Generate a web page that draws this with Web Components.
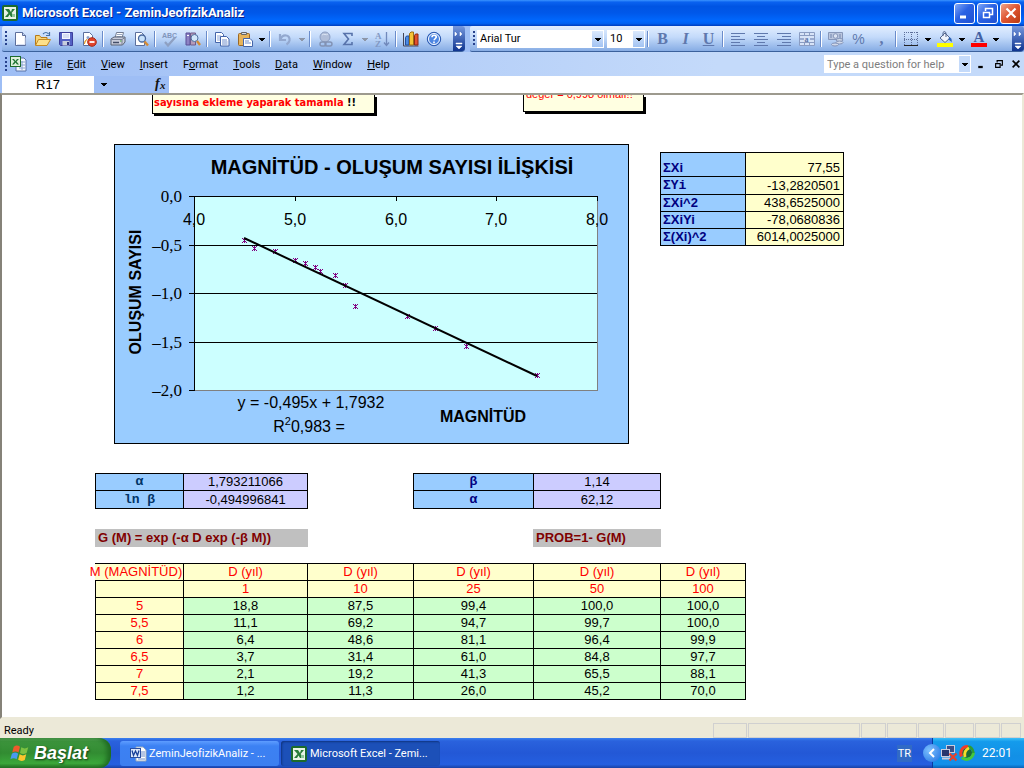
<!DOCTYPE html>
<html lang="tr">
<head>
<meta charset="utf-8">
<title>Microsoft Excel - ZeminJeofizikAnaliz</title>
<style>
html,body{margin:0;height:100%}
body{font-family:Roboto,"Noto Sans",sans-serif;font-size:11px;color:#000;background:#9ebef5}
</style>
</head>
<body>
<excel-desktop></excel-desktop>
<script>
const ICONS = {
excel:'<rect x="1" y="1" width="14" height="14" rx="1" fill="#e9f3e6" stroke="#1d6b2b" stroke-width="2"/><path d="M3 4h4l2 3 1-3h3L9.600 8l3.400 4H9L7.500 9.500 6 12H3l3.500-4z" fill="#2a7d3a"/><path d="M10 9h3v3h-3z" fill="#8fc79a"/>',
book:'<path d="M6 2h8l2 2v11H6z" fill="#f4f8ff" stroke="#5872a8"/><path d="M9 6h6M9 9h6M9 12h6M12 5v9" stroke="#8aa3d0"/><rect x=".5" y=".5" width="10" height="10" fill="#dff0dc" stroke="#1d6b2b"/><path d="M2 3h2l1.500 2L7 3h2L6.500 5.500 9 8.500H7L5.500 6.500 4 8.500H2l2.500-3z" fill="#217534"/>',
word:'<path d="M6 1h7l3 3v11H6z" fill="#fff" stroke="#9ab"/><path d="M11 6h4M11 8h4M11 10h4M8 13h7" stroke="#6d8cc8"/><rect x=".5" y="2.500" width="10" height="9" fill="#dce8fb" stroke="#2a4fa0"/><path d="M2 4.500l1.500 5 2-4.500 2 4.500 1.500-5" fill="none" stroke="#173f98" stroke-width="1.300"/>',
new:'<path d="M3.500 1.500h7l3 3v10h-10z" fill="#fff" stroke="#5c6f9c"/><path d="M10.500 1.500v3h3" fill="#c9d7f0" stroke="#5c6f9c"/><path d="M5 13.500h8v-7" stroke="#d7e0f2" fill="none"/>',
open:'<path d="M.5 14V4.500h4l1.500 2h6V9" fill="#f7d475" stroke="#b67a18"/><path d="M.5 14.500l3-6h12l-3.500 6z" fill="#fde08a" stroke="#c58a22"/><path d="M8 3c2-2 4-2 5.500 0M14.500 1v3.500H11" fill="none" stroke="#4470a8" stroke-width="1.200"/>',
save:'<path d="M1.500 1.500h13v13h-12l-1-1z" fill="#5461c4" stroke="#3d3f9c"/><path d="M4 2h8v6H4z" fill="#f3f6ff"/><path d="M5 4h6M5 6h6" stroke="#b9c5e8"/><path d="M4.500 10h7v4.500h-7z" fill="#c8cede"/><path d="M9 11h2v3H9z" fill="#343a83"/>',
perm:'<path d="M2.500 1.500h6l3 3v10h-9z" fill="#fff" stroke="#5c6f9c"/><path d="M3.500 13c0-3 1-4 3-5" fill="#f0b040" stroke="#dd9930"/><circle cx="7" cy="6.500" r="1.500" fill="#8a9fc8"/><circle cx="11" cy="11" r="4.300" fill="#e2432b" stroke="#a82a18"/><path d="M8.500 11h5" stroke="#fff" stroke-width="1.800"/>',
print:'<path d="M5 7l1.500-5.500h7L12 7" fill="#fff" stroke="#707a90"/><path d="M7 3.500h5M6.500 5.500h5" stroke="#98a6c0"/><path d="M1 8l3-2h11v5l-2.500 3H1z" fill="#c9cddb" stroke="#5b6274"/><path d="M1.500 8.500H12L15 6.500M12 9v5" stroke="#777f92" fill="none"/><path d="M3 11.500h6" stroke="#444e68" stroke-width="1.500"/><path d="M10 9.500h1.500v1H10z" fill="#4aab38"/>',
preview:'<path d="M2.500 1.500h6l3 3v10h-9z" fill="#fff" stroke="#5c6f9c"/><circle cx="9" cy="7.500" r="3.500" fill="#c8e2fb" stroke="#48679e" stroke-width="1.300"/><path d="M11.500 10.500l3.500 4" stroke="#d58a32" stroke-width="2.400"/>',
spell:'<text x="0" y="7" font-size="7" font-weight="bold" font-family="Liberation Sans" fill="#8195bb">ABC</text><path d="M3 11l3 3.500 7-8" stroke="#8ea0c2" stroke-width="2.200" fill="none"/>',
research:'<path d="M1 2h4v12H1z" fill="#8d82c4" stroke="#594f95"/><path d="M5.500 2h5v12h-5z" fill="#b59bb8" stroke="#6d5a8c"/><path d="M2 4.500h2M7 4.500h2" stroke="#fff"/><circle cx="9.500" cy="7" r="3.500" fill="#d1e6fa" stroke="#50709f"/><path d="M12 10l3 4" stroke="#d58a32" stroke-width="2.400"/>',
copy:'<path d="M1.500 1.500h6l2 2v8h-8z" fill="#fff" stroke="#4465aa"/><path d="M3 5h4M3 7h4M3 9h4" stroke="#8fa8da"/><path d="M6.500 5.500h6l2.500 2.500v7H6.500z" fill="#fff" stroke="#4465aa"/><path d="M8 9h5M8 11h5.500M8 13h5.500" stroke="#6e8dcb"/>',
paste:'<rect x="1.500" y="2.500" width="11" height="12" rx="1" fill="#e8b45a" stroke="#9c6824"/><path d="M4.500 3.500v-2h5v2z" fill="#d9dde8" stroke="#666"/><path d="M6.500 7.500H13l2.500 2.500v5.500h-9z" fill="#fff" stroke="#4465aa"/><path d="M8 10h4M8 12h6" stroke="#6e8dcb"/>',
undo:'<path d="M3 3v6h6M3.500 8.500c2-6 10-5 9 1-.4 2-1.500 3-3 4" stroke="#93a8cf" stroke-width="2.200" fill="none"/>',
link:'<circle cx="8" cy="6" r="5" fill="#b1bed8" stroke="#8c9ec2"/><path d="M5 4c2-2 4 1 6-1" stroke="#dce5f4" fill="none"/><rect x="3" y="11" width="6" height="4" rx="2" fill="none" stroke="#8292b3" stroke-width="1.400"/><rect x="8" y="11" width="7" height="4" rx="2" fill="none" stroke="#8292b3" stroke-width="1.400"/>',
sum:'<path d="M12 5V2.500H4L8.500 8 4 13.500h8V11" fill="none" stroke="#5873ab" stroke-width="1.600"/>',
sort:'<text x="1" y="7.500" font-size="9" font-weight="bold" font-family="Liberation Serif" fill="#8299c4">A</text><text x="1" y="16" font-size="9" font-weight="bold" font-family="Liberation Serif" fill="#8299c4">Z</text><path d="M12.500 1v13M10 11.500l2.500 3 2.500-3" fill="none" stroke="#7189bb" stroke-width="1.300"/>',
chart:'<path d="M.5 2v13h15" stroke="#445" fill="none"/><path d="M2.500 6.500l1-1.500h2.500v9H2.500z" fill="#4c8ae3" stroke="#22509c"/><path d="M6.500 2.500L8 1h2.500v13h-4z" fill="#f5c337" stroke="#9d6e12"/><path d="M11.500 4.500l1-1.500H15v11h-3.500z" fill="#e2502e" stroke="#8c2812"/>',
help:'<circle cx="8" cy="8" r="6.700" fill="#4d86e2" stroke="#2a57ae"/><circle cx="8" cy="8" r="5.500" fill="none" stroke="#fff"/><path d="M6 6.300c0-2.600 4.300-2.600 4.300-.2 0 1.500-2.200 1.500-2.200 3.200M8 10.500v1.700" fill="none" stroke="#fff" stroke-width="1.600"/>',
left:'<path d="M1 2.500h14M1 5.500h9M1 8.500h14M1 11.500h9M1 14.500h14" stroke="#6079ad"/>',
center:'<path d="M1 2.500h14M4 5.500h8M1 8.500h14M4 11.500h8M1 14.500h14" stroke="#6079ad"/>',
right:'<path d="M1 2.500h14M6 5.500h9M1 8.500h14M6 11.500h9M1 14.500h14" stroke="#6079ad"/>',
merge:'<path d="M.5 1.500h15v13H.500zM.5 4.500h15M.5 11.500h15M5.500 1.500v3M10.500 1.500v3M5.500 11.500v3M10.500 11.500v3" fill="#d7e3f7" stroke="#8a9cc2"/><text x="5.500" y="10.500" font-size="8" font-weight="bold" font-family="Liberation Serif" fill="#5c75aa">a</text><path d="M1 8h4M11 8h4" stroke="#5c75aa"/>',
money:'<path d="M.5 1.500h14v7H.500z" fill="#bbc6de" stroke="#8696b9"/><circle cx="7.500" cy="5" r="2.300" fill="#dbe3f2" stroke="#8696b9"/><path d="M3 3v4M12 3v4" stroke="#7084ad"/><ellipse cx="11.500" cy="9" rx="3.500" ry="1.500" fill="#d0d9ea" stroke="#8293b8"/><ellipse cx="11.500" cy="11.500" rx="3.500" ry="1.500" fill="#d0d9ea" stroke="#8293b8"/><ellipse cx="7" cy="13.500" rx="3.500" ry="1.500" fill="#d0d9ea" stroke="#8293b8"/>',
borders:'<path d="M1.500 1v14M8.500 1v14M14.500 1v14M1 1.500h14M1 8.500h14" stroke="#5d6f9a" stroke-dasharray="1 1"/><path d="M1 14.500h14" stroke="#222"/>',
fill:'<path d="M3 7l5-5 5 5-5 4.500z" fill="#eef3fb" stroke="#53658c"/><path d="M6 5V1.500c1-1.500 3-1 3 1V6" fill="none" stroke="#53658c"/><path d="M12 6c3 1 3 3 2.500 5.500-1-2-2-2-3-3z" fill="#2f65b6"/><path d="M0 12h16v4H0z" fill="#ff0"/>',
fontc:'<text x="2.500" y="11" font-size="15" font-weight="bold" font-family="Liberation Serif" fill="#4361a3">A</text><path d="M0 12h16v4H0z" fill="#f00"/>',
flag:'<path d="M3 3c2-1.600 3.600-1.300 5 0L6.800 7.500c-1.600-1-3.200-1-5 0z" fill="#ef5a2c"/><path d="M9 3.400c2 1.200 3.600 1.200 5.600 0L13.300 8c-2 1.200-3.700 1-5.300-.1z" fill="#7cc142"/><path d="M1.500 8.600c2-1.300 3.600-1.100 5 0L5.300 13c-1.600-1-3.200-1-5 0z" fill="#4a9af0"/><path d="M7.700 9c2 1.200 3.300 1.200 5.300 0l-1.200 4.500c-2 1.200-3.500 1-5.300-.1z" fill="#fcc52d"/>',
net:'<rect x="5.500" y=".5" width="8" height="7" fill="#3a4e86" stroke="#c8cfdf"/><rect x=".5" y="4.500" width="8" height="7" fill="#26376e" stroke="#c8cfdf"/><path d="M1 13.500h8" stroke="#c8cfdf" stroke-width="2"/><path d="M8.500 8.500l7 7M15.500 8.500l-7 7" stroke="#e8412a" stroke-width="2.200"/>',
orb:'<circle cx="8" cy="8" r="5" fill="#1c6b35"/><path d="M9 1.500C3 1 .5 7 2.500 11.500" fill="none" stroke="#f03a28" stroke-width="3"/><path d="M3 12.500c4 4 11 1 11.500-5" fill="none" stroke="#46c93c" stroke-width="3"/><path d="M14.500 8C14 3 11 1.500 9 2" fill="none" stroke="#2d9c34" stroke-width="2.600"/><path d="M10 3C6 5 5 8 6 12" fill="none" stroke="#f6dc2a" stroke-width="2.800"/>',
down:'<path d="M5 7h6v1h-1v1H9v1H7V9H6V8H5z" fill="currentColor"/>',
fx:'<text x="2" y="12" font-size="14" font-style="italic" font-weight="bold" font-family="Liberation Serif" fill="#111">f</text><text x="7" y="13" font-size="11" font-style="italic" font-weight="bold" font-family="Liberation Serif" fill="#111">x</text>',
min:'<path d="M3 12h6" stroke="currentColor" stroke-width="3"/>',
restore:'<path d="M5.500 6V3.500h7v6H10M5 3.500h8" fill="none" stroke="currentColor" stroke-width="1.500"/><path d="M3.500 7.500h6v5h-6zM3 7.500h7" fill="none" stroke="currentColor" stroke-width="1.500"/>',
close:'<path d="M3.500 3.500l9 9M12.500 3.500l-9 9" stroke="currentColor" stroke-width="2.200"/>'
};
class Base extends HTMLElement{
  constructor(){super();this.attachShadow({mode:'open'});}
  connectedCallback(){this.shadowRoot.innerHTML='<style>'+this.css()+'</style>'+this.html();}
  css(){return ':host{display:block}';}
  html(){return '<slot></slot>';}
}
const def=(n,css,html)=>customElements.define(n,class extends Base{css(){return css;}html(){return typeof html==='function'?html(this):html;}});

def('x-icon',':host{display:inline-block;width:16px;height:16px;flex:none}svg{display:block;width:100%;height:100%;overflow:visible}',
 e=>`<svg viewBox="0 0 16 16" aria-hidden="true">${ICONS[e.getAttribute('name')]}</svg>`);

def('title-bar',`:host{display:flex;align-items:center;height:26px;padding:0 3px 0 2px;color:#fff;background:linear-gradient(#3a93ff 0,#0a62f0 8%,#0054e3 25%,#0058ea 50%,#0068fe 80%,#0061f2 90%,#003dbd 100%)}
h1{flex:1;margin:0 0 0 4px;font:bold 13px/26px Roboto,"Noto Sans",sans-serif;text-shadow:1px 1px #0a1f8a;white-space:nowrap}
div{display:flex;gap:2px}button{width:21px;height:21px;padding:0;border:1px solid #fff;border-radius:3px;color:#fff;display:grid;place-items:center;background:linear-gradient(135deg,#7fa8f8,#2b62e4 45%,#1f51d2)}
button.x{background:linear-gradient(135deg,#f0a58c,#de5430 50%,#b93a12)}`,
`<x-icon name="excel"></x-icon><h1>Microsoft Excel - ZeminJeofizikAnaliz</h1><div><button aria-label="Minimize"><x-icon name="min"></x-icon></button><button aria-label="Restore"><x-icon name="restore"></x-icon></button><button class="x" aria-label="Close"><x-icon name="close"></x-icon></button></div>`);

const b=(n,l)=>`<button aria-label="${l}"><x-icon name="${n}"></x-icon></button>`;
const d=(off)=>`<button class="arr${off?' off':''}" aria-label="More options"><x-icon name="down"></x-icon></button>`;
const s='<i></i>';
const more='<button class="more" aria-label="Toolbar options"><svg width="10" height="21" aria-hidden="true"><path d="M1 4l2 2-2 2zM6 4l2 2-2 2zM2 15h6v1H2zM2 18h6L5 21z" fill="#fff" stroke="#fff" stroke-width=".5"/></svg></button>';
const barCss=`:host{display:flex;height:26px}
.bar{display:flex;align-items:center;height:25px;border-bottom:1px solid #3b619c;border-radius:2px 4px 4px 2px;background:linear-gradient(#e2eeff,#c3dafa 45%,#86ace4)}
.one{width:463px;margin:0 5px 0 2px}.two{flex:1;min-width:0}
.grip{width:2px;height:15px;margin:0 0 0 3px;background:repeating-linear-gradient(#27418c 0 2px,transparent 2px 4px);flex:none}
.one .grip{margin-right:1px}.two .grip{margin-right:2px}
button{width:23px;height:22px;padding:0;border:0;background:none;display:flex;align-items:center;justify-content:center;flex:none;color:#000}
button.arr{width:11px}button.off{color:#8d96a8}
.t{font:bold 16px "Liberation Serif",serif;color:#5f78ad}
i{width:2px;height:16px;margin:0 2px;flex:none;border:0;background:linear-gradient(90deg,#6a8ccb 1px,#fff 1px)}
.more{width:12px;height:25px;margin-left:auto;color:#fff;border-radius:0 3px 3px 0;background:linear-gradient(#7597dd,#0f3590)}
.sel{position:relative;display:flex;flex:none;height:18px}
select{appearance:none;width:100%;height:18px;margin:0;padding:0 0 0 2px;border:1px solid #fff;border-radius:0;font:11px Roboto,sans-serif;color:#000;background:linear-gradient(#dbe9fd,#a3c3f2) right/11px 16px no-repeat #fff}
.sel x-icon{position:absolute;right:-2px;top:1px;pointer-events:none}.f{width:127px;margin:0 3px 0 0}.z{width:38px}`;
def('tool-bars',barCss,
`<div class="bar one"><span class="grip"></span>${b('new','New')}${b('open','Open')}${b('save','Save')}${b('perm','Permission')}${s}${b('print','Print')}${b('preview','Print Preview')}${s}${b('spell','Spelling')}${b('research','Research')}${s}${b('copy','Copy')}${b('paste','Paste')}${d()}${s}${b('undo','Undo')}${d(1)}${s}${b('link','Hyperlink')}${b('sum','AutoSum')}${d(1)}${b('sort','Sort')}${s}${b('chart','Chart Wizard')}${b('help','Help')}${more}</div>
<div class="bar two"><span class="grip"></span><span class="sel f"><select aria-label="Font"><option>Arial Tur</option></select><x-icon name="down"></x-icon></span><span class="sel z"><select aria-label="Font size"><option>10</option></select><x-icon name="down"></x-icon></span>${s}<button class="t">B</button><button class="t"><em>I</em></button><button class="t"><u>U</u></button>${s}${b('left','Align Left')}${b('center','Center')}${b('right','Align Right')}${b('merge','Merge')}${s}${b('money','Currency')}<button class="t" style="font:14px 'Liberation Sans'">%</button><button class="t">,</button>${s}${b('borders','Borders')}${d()}${b('fill','Fill Color')}${d()}${b('fontc','Font Color')}${d()}${more}</div>`);

const menus=['_File','_Edit','_View','_Insert','F_ormat','_Tools','_Data','_Window','_Help'];
def('menu-bar',`:host{display:flex;align-items:center;height:24px;padding-left:5px;background:linear-gradient(90deg,#9ebef5,#c4dafa 70%)}
.grip{width:2px;height:15px;margin-right:3px;background:repeating-linear-gradient(#27418c 0 2px,transparent 2px 4px)}
nav{display:flex;flex:1;margin-left:2px}nav button{border:0;background:none;padding:0 8px 0 7px;height:22px;font:inherit;color:#000}
label{position:relative;display:flex}input{box-sizing:border-box;width:147px;height:18px;border:0;padding:0 4px 0 3px;font:inherit;background:#fff}input::placeholder{color:#7d7d7d}
label span{position:absolute;right:0;top:0;width:11px;height:16px;background:#c4dafa;border:1px solid #fff;display:flex;justify-content:center;pointer-events:none}
.w{display:flex;margin-left:2px}.w button{border:0;background:none;color:#000;height:22px;padding:0;width:17px;display:grid;place-items:center}.w x-icon{width:12px;height:12px}`,
`<span class="grip"></span><x-icon name="book"></x-icon><nav>${menus.map(m=>`<button>${m.replace(/_(.)/,'<u>$1</u>')}</button>`).join('')}</nav><label><input aria-label="Type a question for help" placeholder="Type a question for help"><span><x-icon name="down"></x-icon></span></label><div class="w"><button aria-label="Minimize workbook"><x-icon name="min"></x-icon></button><button aria-label="Restore workbook"><x-icon name="restore"></x-icon></button><button aria-label="Close workbook"><x-icon name="close"></x-icon></button></div>`);

def('formula-bar',`:host{display:flex;height:17px;padding-left:2px;background:#9ebef5}
input{border:0;padding:0;margin:0;font:13px "Liberation Sans",sans-serif;background:#fff;border-radius:0;height:17px;outline:0}
.n{width:92px;text-align:center}.f{flex:1;min-width:0}button{border:0;padding:0;background:none;height:17px}.a{width:20px}.g{width:55px;text-align:right}`,
`<input class="n" aria-label="Name box" value="R17"><button class="a" aria-label="Names"><x-icon name="down"></x-icon></button><button class="g" aria-label="Insert function"><x-icon name="fx"></x-icon></button><input class="f" aria-label="Formula">`);

def('sheet-note',`:host{display:flex;flex-direction:column;justify-content:flex-end;box-sizing:border-box;border:1px solid #000;border-top:0;background:#ffffe1;color:#f00;box-shadow:2px 2px #000;overflow:hidden;white-space:nowrap}`,'<slot></slot>');

const pts=[[130,96],[140,104],[161,107],[181,116],[191,119],[201,123],[206,127],[221,131],[231,141],[241,162],[293,172],[321,184],[352,202],[423,231]];
const grid=[101,149,198], ticks=[80,181,282,382,483];
def('magnitude-chart',`:host{display:block;width:515px;height:300px;flex:none}svg{display:block}text{font-family:"Liberation Sans",sans-serif;font-size:16px;text-anchor:middle}.y{font-family:"Liberation Serif",serif;font-size:17px;text-anchor:end}.b{font-weight:bold}.t{font-size:20px}`,
`<svg width="515" height="300" viewBox="0 0 515 300" role="img" aria-label="Magnitude chart"><g shape-rendering="crispEdges"><rect x=".5" y=".5" width="514" height="299" fill="#9cf" stroke="#000"/><path d="M80.500 52.500h403v194h-403z" fill="#cff" stroke="#808080"/><path d="M75 52.500h408M80.500 52v195M75 246.500h6${grid.map(y=>`M75 ${y}.5h408`).join('')}${ticks.map(x=>`M${x}.5 52v5`).join('')}" stroke="#000"/></g>
<g stroke="#800080" shape-rendering="crispEdges">${pts.map(([x,y])=>`<path d="M${x-2} ${y-2}l5 5M${x+3} ${y-2}l-5 5M${x}.5 ${y-2}v5"/>`).join('')}</g><path d="M130 94L423 232" stroke="#000" stroke-width="2"/>
<text class="b t" x="278" y="30">MAGNİTÜD - OLUŞUM SAYISI İLİŞKİSİ</text>
${['0,0','–0,5','–1,0','–1,5','–2,0'].map((t,i)=>`<text class="y" x="68" y="${[58,107,155,204,252][i]}">${t}</text>`).join('')}
${['4,0','5,0','6,0','7,0','8,0'].map((t,i)=>`<text x="${ticks[i]}" y="81">${t}</text>`).join('')}
<text class="b" transform="translate(27 148) rotate(-90)">OLUŞUM SAYISI</text><text x="197" y="264">y = -0,495x + 1,7932</text><text x="195" y="288">R<tspan dy="-7" font-size="11">2</tspan><tspan dy="7">0,983 =</tspan></text><text class="b" x="369" y="278">MAGNİTÜD</text></svg>`);

const tcss=`:host{display:block;flex:none;font:13px/16px "Liberation Sans",sans-serif}
table{table-layout:fixed;border-spacing:0;border-top:1px solid #000}
th,td{box-sizing:border-box;height:17px;padding:0;border:solid #000;border-width:0 1px 1px 0;text-align:center;white-space:nowrap;font-weight:normal}
th:first-child{border-left-width:1px}`;
def('sums-table',tcss+`table{width:184px}.k{width:86px}th{background:#9cf;color:#000080;font-weight:bold;text-align:left;padding-left:2px}td{background:#ffc;text-align:right;padding-right:3px}tr:first-child>*{height:24px;vertical-align:bottom}tr:nth-child(2)>*{height:18px}.m{font-family:"Liberation Mono",monospace}`,
`<table><colgroup><col class="k"><col></colgroup>${[['ΣXi','77,55'],['ΣYi','-13,2820501'],['ΣXi^2','438,6525000'],['ΣXiYi','-78,0680836'],['Σ(Xi)^2','6014,0025000']].map(([k,v],i)=>`<tr><th scope="row"${i==1?' class="m"':''}>${k}</th><td>${v}</td></tr>`).join('')}</table>`);
const pair=(w,k,rows,c)=>[tcss+`table{width:${w}px}.k{width:${k}px}th{background:#9cf;color:${c};font-weight:bold;font-family:"Liberation Mono",monospace}td{background:#ccf}tr:last-child>*{height:18px}`,`<table><colgroup><col class="k"><col></colgroup>${rows.map(r=>`<tr><th scope="row">${r[0]}</th><td>${r[1]}</td></tr>`).join('')}</table>`];
def('alpha-table',...pair(213,89,[['α','1,793211066'],['ln β','-0,494996841']],'#003366'));
def('beta-table',...pair(248,121,[['β','1,14'],['α','62,12']],'#000080'));
const W=[89,124,106,120,127,85];
const D=[['5','18,8','87,5','99,4','100,0','100,0'],['5,5','11,1','69,2','94,7','99,7','100,0'],['6','6,4','48,6','81,1','96,4','99,9'],['6,5','3,7','31,4','61,0','84,8','97,7'],['7','2,1','19,2','41,3','65,5','88,1'],['7,5','1,2','11,3','26,0','45,2','70,0']];
def('risk-table',tcss+`table{width:651px}${W.map((w,i)=>`.c${i}{width:${w}px}`).join('')}th{background:#ffc;color:#f00}td{background:#cfc}th.m{border-left:0}.m span{display:block;margin:0 0 0 -6px}`,
`<table><colgroup>${W.map((w,i)=>`<col class="c${i}">`).join('')}</colgroup><thead><tr><th class="m" scope="col"><span>M (MAGNİTÜD)</span></th>${'<th scope="col">D (yıl)</th>'.repeat(5)}</tr><tr><th></th>${[1,10,25,50,100].map(n=>`<th>${n}</th>`).join('')}</tr></thead><tbody>${D.map(r=>`<tr><th scope="row">${r[0]}</th>${r.slice(1).map(v=>`<td>${v}</td>`).join('')}</tr>`).join('')}</tbody></table>`);

def('work-sheet',`:host{display:block;flex:1;box-sizing:border-box;background:#fff;border:solid #716f64;border-width:2px 2px 2px 2px;border-color:#9d9a8e #ece9d8 #ece9d8 #858278;overflow:hidden}
.r{display:flex;align-items:flex-start}
.notes{height:49px;padding-left:150px;font:bold 11px/13px "DejaVu Sans Condensed","Noto Sans",sans-serif}
.n1{width:223px;height:19px;padding:0 0 4px 1px}.n1 b{color:#000}
.n2{width:121px;height:17px;margin-left:148px;padding:0 0 10px 2px;font:11px/13px "Liberation Sans",sans-serif}
.charts{padding-left:112px;gap:31px;margin-bottom:29px}sums-table{margin-top:8px}
.pairs{padding-left:93px;gap:105px;margin-bottom:20px}
.eq{padding-left:93px;gap:225px;margin-bottom:16px;font:bold 13px/18px "Liberation Sans",sans-serif;color:#800000}
.eq p{margin:0;box-sizing:border-box;background:#c0c0c0;padding-left:3px;white-space:nowrap}.e1{width:213px}.e2{width:128px}
risk-table{margin-left:93px}`,
`<div class="r notes"><sheet-note class="n1"><span>sayısına ekleme yaparak tamamla <b>!!</b></span></sheet-note><sheet-note class="n2"><span>değer = 0,998 olmalı!!</span></sheet-note></div>
<div class="r charts"><magnitude-chart></magnitude-chart><sums-table></sums-table></div>
<div class="r pairs"><alpha-table></alpha-table><beta-table></beta-table></div>
<div class="r eq"><p class="e1">G (M) = exp (-α D exp (-β M))</p><p class="e2">PROB=1- G(M)</p></div>
<risk-table></risk-table>`);

def('status-bar',`:host{display:flex;align-items:center;height:19px;background:#ece9d8;padding:0 3px 0 4px;gap:1px}
span{flex:1;padding-top:3px}i{box-sizing:border-box;height:15px;margin-top:3px;border:1px solid #d0d0d0}`,
`<span>Ready</span>${[34,112,25,30,26,29,25,20].map(w=>`<i style="width:${w}px"></i>`).join('')}`);

def('task-bar',`:host{display:flex;height:30px;color:#fff;background:linear-gradient(#3a80f0 0,#2a62dd 10%,#2358d6 50%,#255fe0 88%,#1941a5)}
button{border:0;margin:0;color:#fff;font:inherit}
.s{width:111px;display:flex;align-items:center;gap:4px;padding:0 0 0 10px;margin-right:9px;border-radius:0 12px 12px 0;font:italic bold 18px "Liberation Sans",sans-serif;text-shadow:1px 1px 2px #123c12;background:linear-gradient(#5fac5f 0,#3c943c 12%,#328c32 50%,#3ba83b 85%,#267526);box-shadow:inset -4px 0 5px #1f6a22}
.s x-icon{width:20px;height:20px}
.t{width:159px;height:25px;margin:3px 2px 0 0;padding:0 0 0 10px;display:flex;align-items:center;gap:3px;border-radius:3px;background:linear-gradient(#5e9dff,#3c81f3 20%,#3c7ff0);white-space:nowrap;text-align:left}
.t.on{background:#1c50b8;box-shadow:inset 1px 1px 2px #0f3480}
.lang{margin:7px 20px 6px auto;font-size:11px;line-height:17px;padding:0 1px;background:#316ac5}
.tray{box-sizing:border-box;width:92px;display:flex;align-items:center;justify-content:flex-end;gap:2px;padding-right:12px;border-left:1px solid #0b3a9e;background:linear-gradient(#3cc0f8 0,#149bec 12%,#1290e6 60%,#1490ea 88%,#0a62b5);position:relative}
.c{position:absolute;left:-10px;top:6px;width:18px;height:18px;border-radius:50%;padding:0;background:radial-gradient(circle at 35% 35%,#7cc0ff,#1d6fe0)}
.c svg{display:block;margin:auto}time{font-size:12px;margin-left:5px}`,
`<button class="s"><x-icon name="flag"></x-icon><span>Başlat</span></button><button class="t"><x-icon name="word"></x-icon><span>ZeminJeofizikAnaliz - ...</span></button><button class="t on"><x-icon name="excel"></x-icon><span>Microsoft Excel - Zemi...</span></button><span class="lang">TR</span><div class="tray"><button class="c" aria-label="Show hidden icons"><svg width="10" height="10"><path d="M7 1L3 5l4 4" fill="none" stroke="#fff" stroke-width="2"/></svg></button><x-icon name="net"></x-icon><x-icon name="orb"></x-icon><time>22:01</time></div>`);

def('excel-desktop',':host{display:flex;flex-direction:column;min-height:100vh}','<title-bar></title-bar><tool-bars></tool-bars><menu-bar></menu-bar><formula-bar></formula-bar><work-sheet></work-sheet><status-bar></status-bar><task-bar></task-bar>');
</script>
</body>
</html>
